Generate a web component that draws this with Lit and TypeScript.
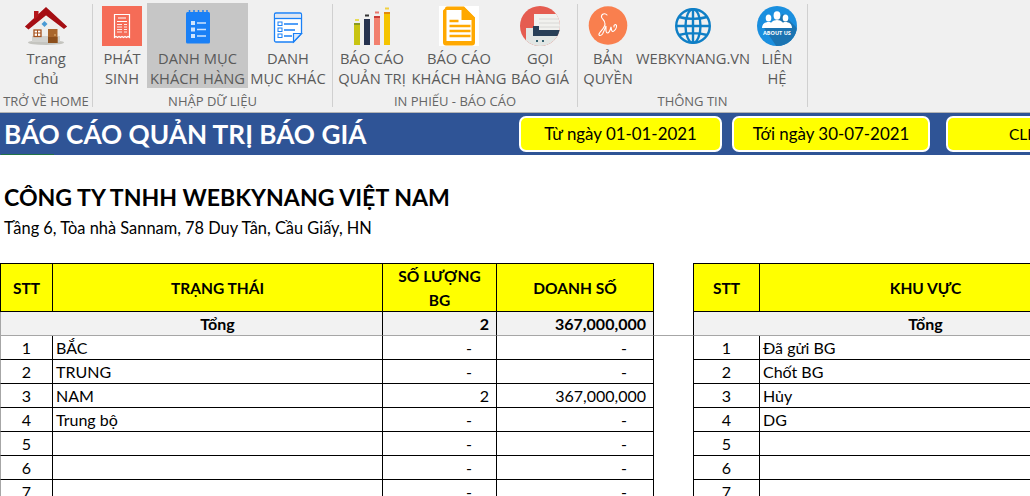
import { LitElement, css, html } from "lit";
import { customElement } from "lit/decorators.js";

const homeIcon = html`<svg class="ico" width="44" height="40" viewBox="0 0 44 40">
  <ellipse cx="22" cy="36.500" rx="18" ry="2.500" fill="#c4c4bf" />
  <path d="M8 19 22 7l14 12v17H8z" fill="#efefec" />
  <path d="M8 30h28v6H8z" fill="#d2d2ce" />
  <path d="M2 20.500 22 2l20 18.500-2 1.500L22 8.500 4.500 22.500z" fill="#a50e13" stroke="#a50e13" stroke-width="1.500" />
  <path d="M10 5h4.500v5l-4.500 4z" fill="#b5161a" />
  <path d="M20.500 15l3 3-3 3-3-3z" fill="#4a9bd4" />
  <rect x="10" y="24" width="7" height="6.500" fill="#fff" stroke="#a5521e" stroke-width="1.300" />
  <path d="M13.500 24v6.500M10 27h7" stroke="#a5521e" />
  <rect x="24" y="23" width="9.500" height="14" fill="#a9672d" />
  <path d="M24 31h9.500v6H24z" fill="#8c4f1c" />
  <circle cx="31" cy="29" r=".8" fill="#ecc98a" />
</svg>`;

const receiptIcon = html`<svg class="ico" width="40" height="40" viewBox="0 0 40 40">
  <rect width="40" height="40" fill="#f56c57" />
  <path d="M12.500 8.500h15v23l-1.500-1-1.500 1-1.500-1-1.500 1-1.500-1-1.500 1-1.500-1-1.500 1-1.500-1-1.500 1z" fill="none" stroke="#fff" stroke-width="1.200" />
  <path d="M16 12h8M15 15.500h10" stroke="#fff" />
  <path d="M15 18.500h5M15 21h5M15 23.500h5M15 26h5M22 18.500h3M22 21h3M22 23.500h3M22 26h3" stroke="#fff" stroke-opacity=".85" />
</svg>`;

const notebookIcon = html`<svg class="ico" width="26" height="40" viewBox="0 0 26 40">
  <rect x="1" y="6" width="24" height="31.500" rx="1.500" fill="#1a80f6" />
  <path d="M4.500 4v4M9 4v4M13.500 4v4M18 4v4M22 4v4" stroke="#1a80f6" stroke-width="1.500" />
  <rect x="6" y="15" width="4" height="4" fill="#cfe4fd" />
  <rect x="6" y="21.500" width="4" height="4" fill="#cfe4fd" />
  <rect x="6" y="28" width="4" height="4" fill="#cfe4fd" />
  <path d="M12 17h9M12 23.500h9M12 30h9" stroke="#cfe4fd" stroke-width="1.300" />
</svg>`;

const docListIcon = html`<svg class="ico" width="30" height="40" viewBox="0 0 30 40">
  <path d="M1.500 8.500a1.500 1.500 0 0 1 1.500-1.500h24a1.500 1.500 0 0 1 1.500 1.500v19l-8 8.500H3a1.500 1.500 0 0 1-1.500-1.500z" fill="#fff" stroke="#1a80f6" stroke-width="1.300" />
  <path d="M2.500 8h25v4.500h-25z" fill="#dfe6f1" />
  <path d="M2 12.500h26" stroke="#1a80f6" stroke-width="1.300" />
  <path d="M28.500 27.500h-8v8.500z" fill="#dbe9fb" stroke="#1a80f6" stroke-width="1.200" />
  <rect x="5" y="16" width="4" height="3.500" fill="#fff" stroke="#1a80f6" />
  <rect x="5" y="22" width="4" height="3.500" fill="#fff" stroke="#1a80f6" />
  <rect x="5" y="28" width="4" height="3.500" fill="#fff" stroke="#1a80f6" />
  <path d="M11 18h14M11 24h11M11 30h8" stroke="#1a80f6" stroke-width="1.400" />
</svg>`;

const chartIcon = html`<svg class="ico" width="44" height="40" viewBox="0 0 44 40">
  <rect x="4" y="17" width="6" height="22" fill="#c8c412" />
  <rect x="4" y="17" width="6" height="2" fill="#8a9a22" />
  <rect x="14" y="13" width="6" height="26" fill="#27334f" />
  <rect x="24" y="10" width="6" height="29" fill="#f2806e" />
  <rect x="24" y="10" width="6" height="2" fill="#c93a34" />
  <rect x="34" y="6" width="6" height="33" fill="#f5c400" />
  <rect x="34" y="6" width="6" height="2" fill="#e28a0c" />
  <path d="M5 14h4" stroke="#e7dc56" stroke-width="2" />
  <path d="M15 9.500h4" stroke="#333" stroke-width="2" />
  <path d="M25 6.500h4" stroke="#e9786c" stroke-width="2" />
  <path d="M35 2.500h4" stroke="#f0d040" stroke-width="2" />
</svg>`;

const orangeDocIcon = html`<svg class="ico" width="40" height="40" viewBox="0 0 40 40">
  <rect width="40" height="40" fill="#fff" />
  <path d="M6 2.500a2 2 0 0 1 2-2h17l11 11v25a3 3 0 0 1-3 3H7a3 3 0 0 1-3-3v-32z" fill="#ffa800" />
  <path d="M7.500 4h15v10h10v21h-25z" fill="#fff" />
  <path d="M25 1v11h11" fill="#ffa800" />
  <path d="M10.500 15h9M10.500 20h21M10.500 25h21M10.500 30h21" stroke="#ffa800" stroke-width="2.400" />
</svg>`;

const quoteIcon = html`<svg class="ico" width="40" height="40" viewBox="0 0 40 40">
  <defs><clipPath id="qc"><circle cx="20" cy="20" r="20" /></clipPath></defs>
  <g clip-path="url(#qc)">
    <rect width="40" height="40" fill="#e55c50" />
    <rect x="14" y="8" width="26" height="20" fill="#f1f1ee" />
    <path d="M19 13h21M19 17h21M19 21h21" stroke="#d8d8d6" />
    <path d="M13 20h6v4h21v6H13z" fill="#283f57" />
    <path d="M6 22h7v8h27v10H6z" fill="#e2e6e4" />
    <path d="M16 35h2M22 35h2" stroke="#33606f" stroke-width="2" />
  </g>
</svg>`;

const signIcon = html`<svg class="ico" width="40" height="40" viewBox="0 0 40 40">
  <circle cx="20" cy="19.500" r="19.300" fill="#f97f4e" />
  <path d="M19 9c-2-2.500-6-1-5.500 2 .5 2.500 3.500 3 3.500 7 0 4-5 7-6 10-.5 2 2 2 3.500 0 1.500-2.500 2.500-6 3.500-8 0 3-.5 7 1.500 7 2 0 3-4 3.500-6 .5 2 .5 5 2 4.500 2-.5 4-4 3.500-6-.5-1.500-3-1-2.500 1.500" fill="none" stroke="#fff" stroke-width="1.100" stroke-linecap="round" />
</svg>`;

const globeIcon = html`<svg class="ico" width="40" height="40" viewBox="0 0 40 40">
  <g fill="none" stroke="#0f7fc6" stroke-width="2.400">
    <circle cx="20" cy="20" r="16.800" />
    <ellipse cx="20" cy="20" rx="7.500" ry="16.800" />
    <path d="M20 3v34M3 20h34M6 11c8 2.500 20 2.500 28 0M6 29c8-2.500 20-2.500 28 0" />
  </g>
</svg>`;

const aboutIcon = html`<svg class="ico" width="40" height="40" viewBox="0 0 40 40">
  <defs><clipPath id="ac"><circle cx="20" cy="20" r="20" /></clipPath></defs>
  <circle cx="20" cy="20" r="20" fill="#1a8fdf" />
  <g clip-path="url(#ac)">
    <path d="M7 22 26 8l16 16v20H22z" fill="#1b74b2" />
  </g>
  <g fill="#fff">
    <ellipse cx="11.500" cy="12" rx="2.800" ry="3.500" />
    <ellipse cx="28.500" cy="12" rx="2.800" ry="3.500" />
    <path d="M5 22c0-4 3-6 6.500-6s5 2 5 6zM23.500 22c0-4 1.500-6 5-6s6.500 2 6.500 6z" />
    <ellipse cx="20" cy="9.500" rx="3.400" ry="4.200" />
    <path d="M12.500 22c0-5 3-8 7.500-8s7.500 3 7.500 8z" />
  </g>
  <text class="about" x="20" y="28.500" text-anchor="middle">ABOUT US</text>
</svg>`;

type RibbonItem = { lines: string[]; width: number; icon: unknown; active?: boolean; gap?: number };
type RibbonGroup = { label: string; width: number; pad?: number; items: RibbonItem[] };

const groups: RibbonGroup[] = [
  { label: "TRỞ VỀ HOME", width: 92, items: [{ lines: ["Trang", "chủ"], width: 92, icon: homeIcon }] },
  {
    label: "NHẬP DỮ LIỆU",
    width: 239,
    pad: 7,
    items: [
      { lines: ["PHÁT", "SINH"], width: 44, icon: receiptIcon, gap: 3 },
      { lines: ["DANH MỤC", "KHÁCH HÀNG"], width: 101, icon: notebookIcon, active: true, gap: 2 },
      { lines: ["DANH", "MỤC KHÁC"], width: 76, icon: docListIcon },
    ],
  },
  {
    label: "IN PHIẾU - BÁO CÁO",
    width: 244,
    items: [
      { lines: ["BÁO CÁO", "QUẢN TRỊ"], width: 78, icon: chartIcon },
      { lines: ["BÁO CÁO", "KHÁCH HÀNG"], width: 96, icon: orangeDocIcon },
      { lines: ["GỌI", "BÁO GIÁ"], width: 66, icon: quoteIcon },
    ],
  },
  {
    label: "THÔNG TIN",
    width: 229,
    items: [
      { lines: ["BẢN", "QUYỀN"], width: 60, icon: signIcon },
      { lines: ["WEBKYNANG.VN"], width: 110, icon: globeIcon },
      { lines: ["LIÊN", "HỆ"], width: 58, icon: aboutIcon },
    ],
  },
];

const left = ["BẮC", "TRUNG", "NAM", "Trung bộ", "", "", ""];
const right = ["Đã gửi BG", "Chốt BG", "Hủy", "DG", "", "", ""];

@customElement("app-root")
export class AppRoot extends LitElement {
  static styles = css`
    :host {
      display: block;
      width: 1030px;
      height: 496px;
      overflow: hidden;
      background: #fff;
      font-family: Lato, "Open Sans", sans-serif;
      color: #000;
    }
    .ribbon {
      display: flex;
      height: 112px;
      background: #f0f0f0;
      border-bottom: 1px solid #b4b4b4;
      font-family: "Open Sans", "Noto Sans", sans-serif;
    }
    .group {
      display: flex;
      flex-direction: column;
      flex: none;
    }
    .items {
      display: flex;
      height: 85px;
      margin-top: 3px;
    }
    .item {
      flex: none;
      display: flex;
      flex-direction: column;
      align-items: center;
      padding-top: 3px;
      box-sizing: border-box;
      color: #5a5a5a;
      font-size: 14.700px;
      line-height: 20px;
      white-space: nowrap;
    }
    .item.active {
      background: #c6c6c6;
    }
    .icon-slot {
      height: 40px;
      margin-bottom: 2px;
      display: flex;
      justify-content: center;
    }
    .ico {
      display: block;
    }
    .about {
      font-size: 5.500px;
      font-weight: 700;
      fill: #fff;
      font-family: "Open Sans", sans-serif;
    }
    .group-label {
      margin-top: 4px;
      text-align: center;
      font-size: 13px;
      line-height: 18px;
      color: #666;
    }
    .sep {
      flex: none;
      width: 1px;
      margin: 4px 0 5px;
      background: #d0d0d0;
    }
    .titlebar {
      position: relative;
      display: flex;
      align-items: center;
      height: 42px;
      background: #2f5496;
      overflow: hidden;
    }
    .titlebar::after {
      content: "";
      position: absolute;
      left: 1px;
      bottom: 0;
      width: 53px;
      height: 1px;
      background: #217346;
    }
    .title {
      flex: none;
      width: 519px;
      padding-left: 4px;
      box-sizing: border-box;
      font-size: 26.200px;
      font-weight: 700;
      color: #fff;
      white-space: nowrap;
    }
    .btn {
      flex: none;
      box-sizing: border-box;
      height: 36px;
      margin-right: 10px;
      border: 2px solid #fff;
      border-radius: 7px;
      background: #ff0;
      font-size: 16.900px;
      line-height: 32px;
      text-align: center;
      white-space: nowrap;
    }
    .btn.from {
      width: 203px;
    }
    .btn.to {
      width: 198px;
      margin-right: 16px;
    }
    .btn.click {
      width: 300px;
      padding-left: 61px;
      font-size: 15.500px;
      text-align: left;
    }
    .company {
      height: 108px;
      padding: 28px 0 0 4px;
      box-sizing: border-box;
    }
    .company h1 {
      margin: 0;
      font-size: 23.100px;
      line-height: 28px;
      font-weight: 700;
      white-space: nowrap;
    }
    .company p {
      margin: 7px 0 0;
      font-size: 16.400px;
      line-height: 20px;
      white-space: nowrap;
    }
    .sheet {
      display: grid;
      grid-template-columns: 53px 330px 114px 157px 39px 67px 332px 114px;
      grid-template-rows: 49px 24px repeat(7, 24px);
      width: 1206px;
      font-size: 16px;
    }
    .cell {
      box-sizing: border-box;
      border-right: 1px solid #000;
      border-bottom: 1px solid #000;
      display: flex;
      align-items: center;
      justify-content: center;
      white-space: nowrap;
      line-height: 23px;
    }
    .cell.gap {
      border-right: 0;
      border-bottom: 0;
    }
    .cell.gap.total {
      border-bottom: 1px solid #a6a6a6;
      background: #fff;
    }
    .cell.first {
      border-left: 1px solid #000;
    }
    .cell.rowstart {
      border-left: 1px solid #a6a6a6;
    }
    .cell.head {
      border-top: 1px solid #000;
      background: #ff0;
      font-size: 15.500px;
      font-weight: 700;
      text-align: center;
      line-height: 24px;
    }
    .cell.total {
      background: #f2f2f2;
      font-weight: 700;
      border-bottom-color: #a6a6a6;
    }
    .cell.noline {
      border-right: 0;
    }
    .cell.name {
      justify-content: flex-start;
      padding-left: 3px;
    }
    .cell.num {
      justify-content: flex-end;
      padding-right: 7px;
    }
    .cell.dash {
      justify-content: flex-end;
      padding-right: 26px;
    }
    .cell.qty {
      padding-right: 7px;
    }
    .cell.qty.dash {
      padding-right: 24px;
    }
  `;

  private renderGroup(g: RibbonGroup) {
    return html`<div class="group" style="width:${g.width}px">
      <div class="items" style="padding-left:${g.pad ?? 0}px">
        ${g.items.map(
          (it) => html`<div
            class="item ${it.active ? "active" : ""}"
            style="width:${it.width}px;margin-right:${it.gap ?? 0}px"
          >
            <div class="icon-slot">${it.icon}</div>
            ${it.lines.map((l) => html`<div>${l}</div>`)}
          </div>`,
        )}
      </div>
      <div class="group-label">${g.label}</div>
    </div>`;
  }

  render() {
    const rows = [0, 1, 2, 3, 4, 5, 6];
    return html`
      <div class="ribbon">
        ${groups.map((g) => html`${this.renderGroup(g)}<div class="sep"></div>`)}
      </div>
      <div class="titlebar">
        <div class="title">BÁO CÁO QUẢN TRỊ BÁO GIÁ</div>
        <div class="btn from">Từ ngày 01-01-2021</div>
        <div class="btn to">Tới ngày 30-07-2021</div>
        <div class="btn click">CLICK XEM</div>
      </div>
      <div class="company">
        <h1>CÔNG TY TNHH WEBKYNANG VIỆT NAM</h1>
        <p>Tầng 6, Tòa nhà Sannam, 78 Duy Tân, Cầu Giấy, HN</p>
      </div>
      <div class="sheet">
        <div class="cell head first">STT</div>
        <div class="cell head">TRẠNG THÁI</div>
        <div class="cell head">SỐ LƯỢNG<br />BG</div>
        <div class="cell head">DOANH SỐ</div>
        <div class="cell gap"></div>
        <div class="cell head first">STT</div>
        <div class="cell head">KHU VỰC</div>
        <div class="cell head">SỐ LƯỢNG</div>

        <div class="cell total rowstart noline"></div>
        <div class="cell total">Tổng</div>
        <div class="cell total num">2</div>
        <div class="cell total num">367,000,000</div>
        <div class="cell gap total"></div>
        <div class="cell total first noline"></div>
        <div class="cell total">Tổng</div>
        <div class="cell total num">2</div>

        ${rows.map(
          (i) => html`
            <div class="cell rowstart">${i + 1}</div>
            <div class="cell name">${left[i]}</div>
            ${i === 2
              ? html`<div class="cell num">2</div>
                  <div class="cell num">367,000,000</div>`
              : html`<div class="cell qty dash">-</div>
                  <div class="cell dash">-</div>`}
            <div class="cell gap"></div>
            <div class="cell first">${i + 1}</div>
            <div class="cell name">${right[i]}</div>
            <div class="cell qty dash">-</div>
          `,
        )}
      </div>
    `;
  }
}
